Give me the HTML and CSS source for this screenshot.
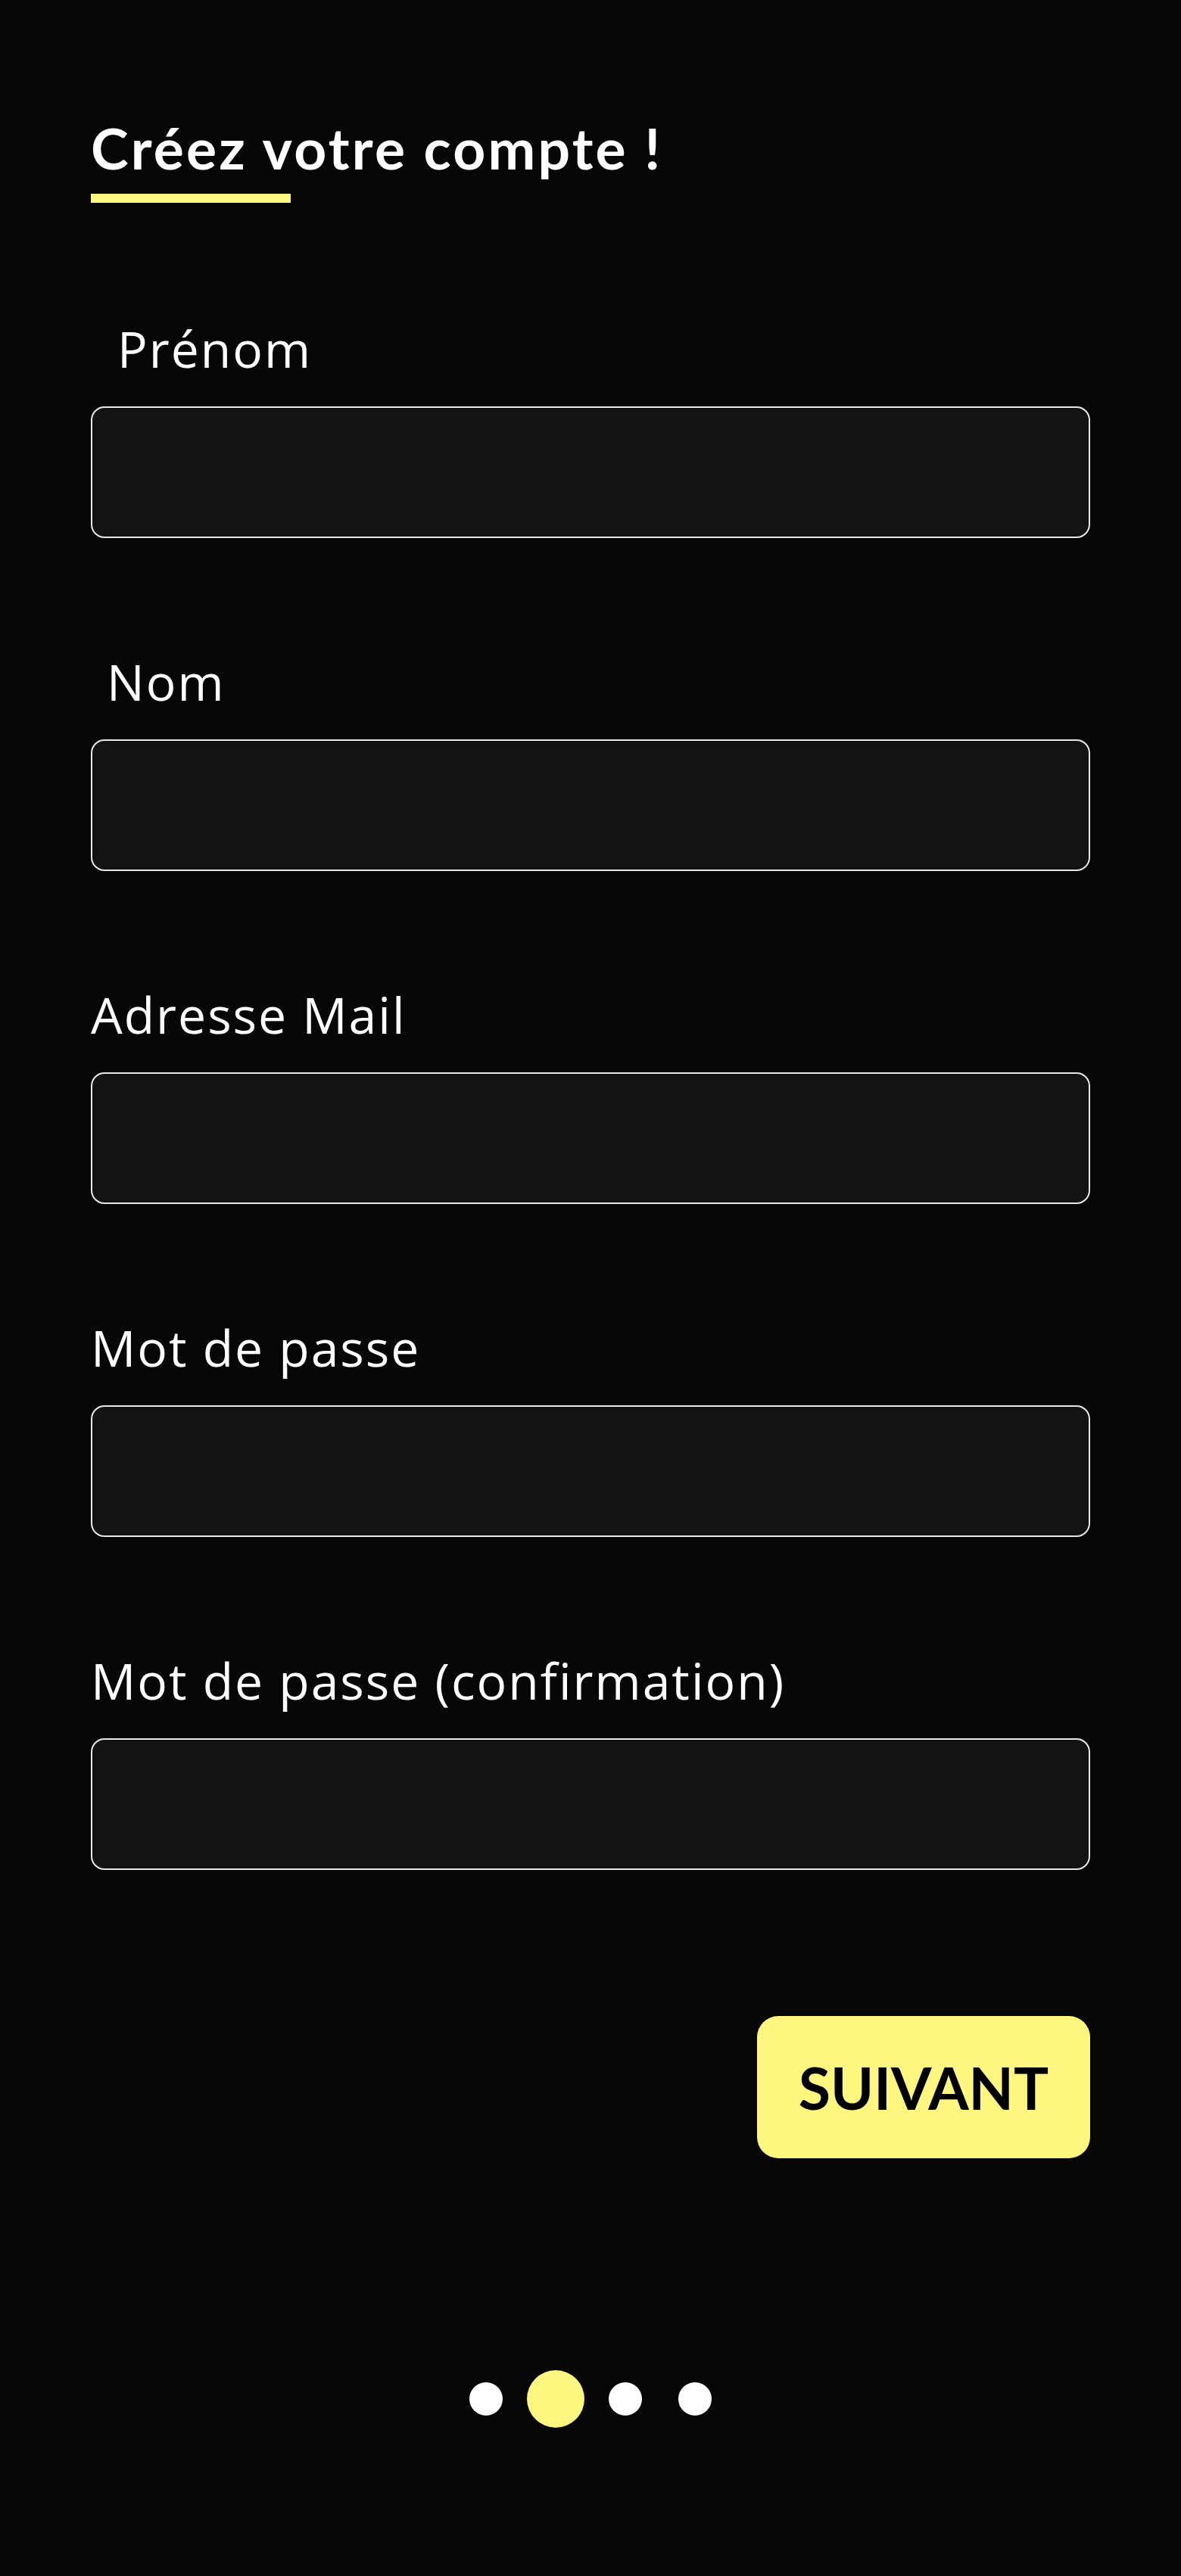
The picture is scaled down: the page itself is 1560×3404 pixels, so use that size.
FILE: index.html
```html
<!DOCTYPE html>
<html lang="fr">
<head>
<meta charset="utf-8">
<title>Créez votre compte !</title>
<link rel="stylesheet" href="styles.css">
</head>
<body>
<main class="page">
  <header class="heading">
    <h1 class="title">Créez votre compte !</h1>
    <div class="title-bar"></div>
  </header>

  <form class="form">
    <div class="fields">
      <div class="field">
        <label class="label label-first">Prénom</label>
        <input class="input" type="text">
      </div>
      <div class="field">
        <label class="label label-second">Nom</label>
        <input class="input" type="text">
      </div>
      <div class="field">
        <label class="label">Adresse Mail</label>
        <input class="input" type="email">
      </div>
      <div class="field">
        <label class="label">Mot de passe</label>
        <input class="input" type="password">
      </div>
      <div class="field">
        <label class="label">Mot de passe (confirmation)</label>
        <input class="input" type="password">
      </div>
    </div>

    <div class="actions">
      <button class="next" type="button">SUIVANT</button>
    </div>
  </form>

  <nav class="steps">
    <span class="step"><span class="dot"></span></span>
    <span class="step"><span class="dot dot-active"></span></span>
    <span class="step"><span class="dot"></span></span>
    <span class="step"><span class="dot"></span></span>
  </nav>
</main>
</body>
</html>
```

FILE: styles.css
```css
* {
  box-sizing: border-box;
}

html, body {
  margin: 0;
  padding: 0;
  background: #070707;
}

body {
  min-height: 3404px;
  color: #ffffff;
  font-family: "Open Sans", "Liberation Sans", sans-serif;
}

.page {
  width: 1560px;
  padding: 150px 120px 0 120px;
}

.heading {
  display: flex;
  flex-direction: column;
}

.title {
  margin: 0;
  font-family: Lato, "Liberation Sans", sans-serif;
  font-weight: 700;
  font-size: 75px;
  letter-spacing: 3.2px;
  line-height: 90px;
  color: #ffffff;
}

.title-bar {
  margin-top: 16px;
  width: 264px;
  height: 12px;
  background: #fff67f;
}

.form {
  display: flex;
  flex-direction: column;
  margin-top: 152px;
}

.fields {
  display: flex;
  flex-direction: column;
  gap: 149px;
}

.field {
  display: flex;
  flex-direction: column;
}

.label {
  display: block;
  font-family: "Open Sans", "Liberation Sans", sans-serif;
  font-weight: 400;
  font-size: 66px;
  letter-spacing: 2px;
  line-height: 80px;
  color: #ffffff;
}

.label-first {
  padding-left: 35px;
}

.label-second {
  padding-left: 21px;
}

.input {
  display: block;
  margin: 37px 0 0 0;
  width: 1320px;
  height: 174px;
  background: #131313;
  border: 2px solid #e9e9e9;
  border-radius: 18px;
  outline: none;
  -webkit-appearance: none;
  appearance: none;
  color: #ffffff;
  font-size: 56px;
  padding: 0 30px;
}

.actions {
  display: flex;
  justify-content: flex-end;
  margin-top: 193px;
}

.next {
  width: 440px;
  height: 188px;
  border: none;
  border-radius: 28px;
  background: #fff67f;
  color: #000000;
  font-family: Lato, "Liberation Sans", sans-serif;
  font-weight: 700;
  font-size: 77px;
  line-height: 188px;
  padding: 0;
  cursor: pointer;
}

.steps {
  display: flex;
  justify-content: center;
  align-items: center;
  margin-top: 280px;
  height: 76px;
}

.step {
  display: flex;
  justify-content: center;
  align-items: center;
  width: 92px;
  height: 76px;
}

.dot {
  display: block;
  width: 44px;
  height: 44px;
  border-radius: 50%;
  background: #ffffff;
}

.dot-active {
  width: 76px;
  height: 76px;
  background: #fff67f;
}
```
